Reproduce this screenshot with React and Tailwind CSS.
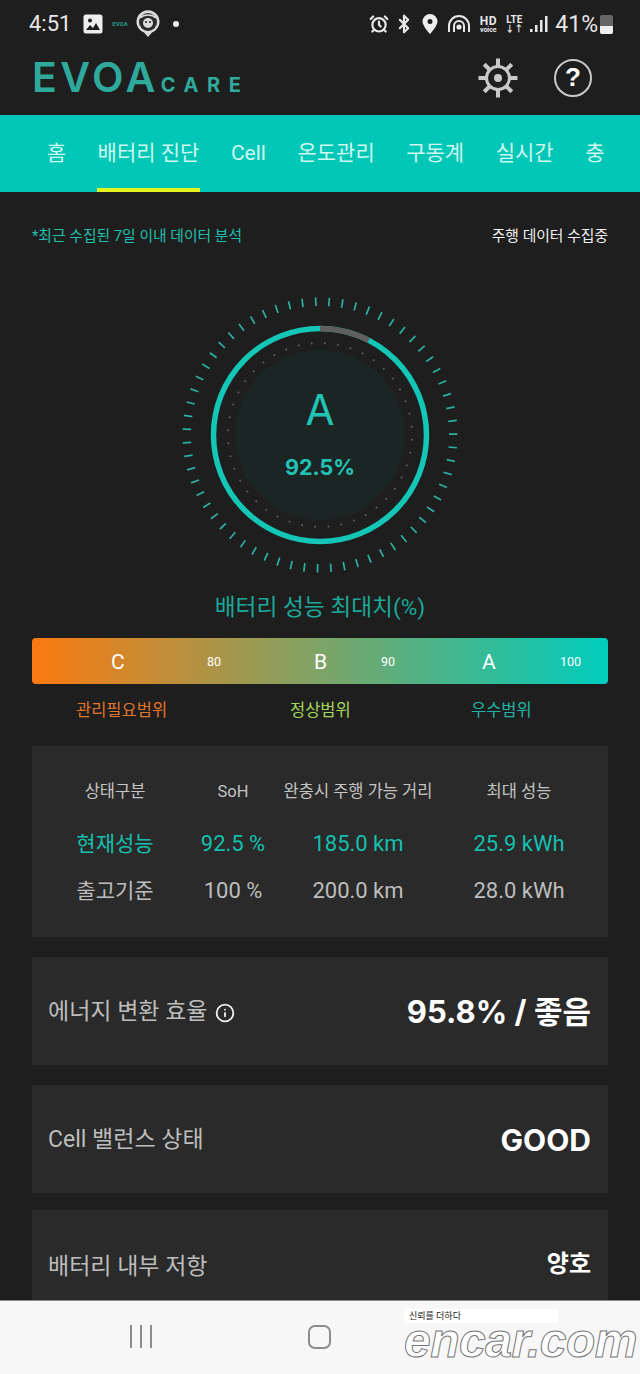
import React from "react";
import { Info, AlarmClock, Bluetooth } from "lucide-react";

const KR = "font-['Roboto','Noto_Sans_CJK_KR',sans-serif]";
const GEO = "font-['Inter','Noto_Sans_CJK_KR',sans-serif]";

function Gauge() {
  const c = 140;
  const ticks = Array.from({ length: 63 }, (_, i) => (i * 360) / 63 + 3.9);
  const dots = Array.from({ length: 44 }, (_, i) => (i * 360) / 44 + 3);
  return (
    <div className="relative w-[280px] h-[280px]">
      <svg width="280" height="280" viewBox="0 0 280 280">
        {ticks.map((a) => {
          const r = (a * Math.PI) / 180;
          return (
            <line key={a} x1={c + 129 * Math.sin(r)} y1={c - 129 * Math.cos(r)} x2={c + 137.5 * Math.sin(r)} y2={c - 137.5 * Math.cos(r)} stroke="#2cb09f" strokeWidth="1.7" />
          );
        })}
        <circle cx={c} cy={c} r="85" fill="#1b2524" />
        {dots.map((a) => {
          const r = (a * Math.PI) / 180;
          return <circle key={a} cx={c + 92 * Math.sin(r)} cy={c - 92 * Math.cos(r)} r="1" fill="#5a6664" />;
        })}
        <circle cx={c} cy={c} r="106.500" fill="none" stroke="#14c6b6" strokeWidth="5.500" />
        <path d={`M ${c} ${c - 106.5} A 106.500 106.500 0 0 1 ${c + 106.5 * Math.sin(0.475)} ${c - 106.5 * Math.cos(0.475)}`} fill="none" stroke="#5f5f5f" strokeWidth="5.700" />
      </svg>
      <div className={`absolute left-0 right-0 top-[90px] text-center text-[42px] leading-[50px] font-normal text-[#22c3b4] ${GEO}`}>A</div>
      <div className={`absolute left-0 right-0 top-[158px] text-center text-[21.500px] leading-[28px] font-bold text-[#22c3b4] ${GEO}`}>92.5%</div>
    </div>
  );
}

function Gear() {
  const teeth = Array.from({ length: 8 }, (_, i) => i * 45);
  return (
    <svg width="42" height="42" viewBox="0 0 42 42" fill="none" stroke="#c9c9c9">
      <circle cx="21" cy="21" r="11.500" strokeWidth="3" />
      <circle cx="21" cy="21" r="4" fill="#c9c9c9" stroke="none" />
      {teeth.map((a) => (
        <line key={a} x1="21" y1="9" x2="21" y2="1.500" strokeWidth="4" transform={`rotate(${a} 21 21)`} />
      ))}
    </svg>
  );
}

function StatusBar() {
  return (
    <div className={`h-12 flex items-center pl-[29px] pr-[27px] text-[#e8e8e8] ${KR}`}>
      <span className="text-[22px] leading-none w-[54px]">4:51</span>
      <svg width="20" height="20" viewBox="0 0 20 20" className="mr-[7px]">
        <rect x="0.500" y="0.500" width="19" height="19" rx="2.500" fill="#eee" />
        <path d="M3 16l4-5 3 3 3-5 4 7z" fill="#1d1d1d" />
        <circle cx="7" cy="6.500" r="2" fill="#1d1d1d" />
      </svg>
      <div className="w-[20px] mr-[6px] text-center text-[6px] leading-none font-bold text-[#2a9c8f]">EVOA</div>
      <svg width="24" height="28" viewBox="0 0 24 28" className="mr-[13px]" fill="none">
        <path d="M12 27l-4-4.500A11.500 11.500 0 1 1 16 22.500z" fill="#dcdcdc" />
        <circle cx="12" cy="12" r="9" fill="#2a2a2a" />
        <circle cx="12" cy="13" r="5" fill="#ddd" />
        <circle cx="10" cy="12" r="1" fill="#222" />
        <circle cx="14" cy="12" r="1" fill="#222" />
        <path d="M4 8c4-4 12-4 16 0" stroke="#ddd" strokeWidth="1.500" />
      </svg>
      <span className="w-[6px] h-[6px] rounded-full bg-[#eee]" />
      <div className="flex-1" />
      <AlarmClock size={20} strokeWidth={2.6} className="mr-[5px] -ml-[3px]" />
      <Bluetooth size={20} strokeWidth={2.6} className="mr-[7px]" />
      <svg width="18" height="20" viewBox="0 0 18 20" className="mr-[8px]">
        <path fillRule="evenodd" fill="#eee" d="M9 0a7.500 7.500 0 0 1 7.500 7.500C16.500 12 9 20 9 20S1.500 12 1.500 7.500A7.500 7.500 0 0 1 9 0zm0 5a2.500 2.500 0 1 0 0 5 2.500 2.500 0 0 0 0-5z" />
      </svg>
      <svg width="24" height="22" viewBox="0 0 24 22" fill="none" stroke="#e8e8e8" strokeWidth="2" className="mr-[7px]">
        <path d="M2 19v-6a10 10 0 0 1 20 0v6" />
        <path d="M7 19v-6a5 5 0 0 1 10 0v6" />
        <circle cx="12" cy="14" r="1.600" fill="#e8e8e8" />
      </svg>
      <div className="w-[20px] mr-[7px] flex flex-col items-center font-bold leading-none">
        <span className="text-[12px] tracking-[0.5px]">HD</span>
        <span className="text-[7px]">voice</span>
      </div>
      <div className="w-[18px] mr-[7px] flex flex-col items-center font-bold leading-none">
        <span className="text-[10px]">LTE</span>
        <span className="text-[9px] leading-[9px]">↓↑</span>
      </div>
      <svg width="18" height="18" viewBox="0 0 18 18" fill="#e8e8e8" className="mr-[7px]">
        <rect x="0" y="14" width="2.500" height="3" />
        <rect x="5" y="10" width="2.500" height="7" />
        <rect x="10" y="5" width="2.500" height="12" />
        <rect x="15" y="1" width="2.500" height="16" />
      </svg>
      <span className="text-[23px] leading-none mr-[2px]">41%</span>
      <div className="w-[13px] h-[19px] rounded-[2px] bg-[#666] flex flex-col justify-end overflow-hidden">
        <div className="h-[8px] bg-[#eee]" />
      </div>
    </div>
  );
}

function Header() {
  return (
    <div className="h-[67px] flex items-center pl-[32px] pr-[48px] pb-[8px]">
      <div className={`flex items-baseline text-[#2fa99c] ${GEO}`}>
        <span className="text-[41px] leading-none font-semibold tracking-[3.500px]">EVOA</span>
        <span className="text-[20px] leading-none font-bold tracking-[8.500px] ml-[2px]">CARE</span>
      </div>
      <div className="flex-1" />
      <Gear />
      <div className="w-[38px] h-[38px] ml-[35px] rounded-full border-[2.500px] border-[#c9c9c9] flex items-center justify-center text-[26px] font-bold text-white font-['Liberation_Sans',sans-serif]">?</div>
    </div>
  );
}

function Tabs() {
  const items = ["홈", "배터리 진단", "Cell", "온도관리", "구동계", "실시간", "충"];
  return (
    <div className={`h-[77px] bg-[#02c7b6] pl-[31px] flex overflow-hidden text-[21px] text-[#cdf7f1] ${KR}`}>
      {items.map((t, i) => (
        <div key={t} className="h-full flex items-center px-[15.750px] relative">
          <span className="whitespace-nowrap">{t}</span>
          {i === 1 && <span className="absolute left-[15px] right-[15px] bottom-0 h-[4px] bg-[#e4f41c]" />}
        </div>
      ))}
    </div>
  );
}

function Row({ label, value, valueClass, extra, className = "" }) {
  return (
    <div className={`h-[108px] bg-[#2a2a2a] flex items-center pl-[16px] pr-[17px] pt-[3px] ${className}`}>
      <span className={`text-[23px] text-[#bdbdbd] ${KR}`}>{label}</span>
      {extra}
      <div className="flex-1" />
      <span className={`font-bold text-white ${GEO} ${valueClass}`}>{value}</span>
    </div>
  );
}

export default function App() {
  const head = ["상태구분", "SoH", "완충시 주행 가능 거리", "최대 성능"];
  const cur = ["현재성능", "92.5 %", "185.0 km", "25.9 kWh"];
  const base = ["출고기준", "100 %", "200.0 km", "28.0 kWh"];
  const grid = "grid grid-cols-[166px_70px_180px_142px] text-center";
  const cell = (t, i) => (
    <span key={t} className={`whitespace-nowrap ${i === 0 ? "text-[21px]" : ""}`}>{t}</span>
  );
  return (
    <div className={`w-[640px] h-[1374px] bg-[#1e1e1e] flex flex-col overflow-hidden ${KR}`}>
      <StatusBar />
      <Header />
      <Tabs />
      <main className="flex-1 overflow-hidden px-[32px] min-h-0">
        <div className="flex justify-between items-center mt-[34px] h-[20px] text-[14.800px]">
          <span className="text-[#1fc0ae]">*최근 수집된 7일 이내 데이터 분석</span>
          <span className="text-[#f0f0f0]">주행 데이터 수집중</span>
        </div>
        <div className="flex justify-center mt-[49px]">
          <Gauge />
        </div>
        <div className="text-center text-[22.700px] leading-[30px] mt-[18px] text-[#1ba99a]">배터리 성능 최대치(%)</div>
        <div className="relative mt-[15px] h-[46px] rounded-[4px] bg-[linear-gradient(90deg,#fb7a10,#00cdbd)] text-white">
          <span className="absolute left-[79px] top-[12px] text-[21px] leading-[24px]">C</span>
          <span className="absolute left-[175px] top-[16px] text-[12.500px] leading-[16px]">80</span>
          <span className="absolute left-[282px] top-[12px] text-[21px] leading-[24px]">B</span>
          <span className="absolute left-[349px] top-[16px] text-[12.500px] leading-[16px]">90</span>
          <span className="absolute left-[450px] top-[12px] text-[21px] leading-[24px]">A</span>
          <span className="absolute left-[528px] top-[16px] text-[12.500px] leading-[16px]">100</span>
        </div>
        <div className="relative h-[50px] text-[16.500px] leading-[20px]">
          <span className="absolute left-[44px] top-[17px] text-[#e2752a]">관리필요범위</span>
          <span className="absolute left-[258px] top-[17px] text-[#a6d65c]">정상범위</span>
          <span className="absolute left-[439px] top-[17px] text-[#1fb5a6]">우수범위</span>
        </div>
        <div className="mt-[12px] h-[191px] bg-[#2a2a2a] pt-[35px]">
          <div className={`${grid} text-[16.500px] leading-[22px] text-[#c4c4c4]`}>
            {head.map((t) => <span key={t} className="whitespace-nowrap">{t}</span>)}
          </div>
          <div className={`${grid} mt-[26px] text-[22px] leading-[30px] text-[#14bfae]`}>
            {cur.map(cell)}
          </div>
          <div className={`${grid} mt-[17px] text-[22px] leading-[30px] text-[#bdbdbd]`}>
            {base.map(cell)}
          </div>
        </div>
        <Row className="mt-[20px]" label="에너지 변환 효율" value="95.8% / 좋음" valueClass="text-[31px]" extra={<Info size={20} strokeWidth={2.2} className="ml-[7px] text-[#eeeeee]" />} />
        <Row className="mt-[20px]" label="Cell 밸런스 상태" value="GOOD" valueClass="text-[30px]" />
        <div className="mt-[17px] h-[108px] bg-[#2a2a2a] flex items-center pl-[16px] pr-[17px]">
          <span className="mt-[6px] text-[23px] leading-[30px] text-[#bdbdbd]">배터리 내부 저항</span>
          <div className="flex-1" />
          <span className="text-[24px] leading-[36px] font-bold text-white">양호</span>
        </div>
      </main>
      <nav className="relative h-[74px] shrink-0 bg-[#f7f7f7] border-t border-[#8a8a8a] flex items-center pb-[2px]">
        <div className="ml-[130px] flex gap-[8px]">
          <span className="w-[2px] h-[23px] bg-[#8c8c8c]" />
          <span className="w-[2px] h-[23px] bg-[#8c8c8c]" />
          <span className="w-[2px] h-[23px] bg-[#8c8c8c]" />
        </div>
        <span className="ml-[156px] w-[23px] h-[24px] rounded-[7px] border-2 border-[#8c8c8c]" />
        <div className="absolute left-[404px] top-[8px] w-[154px] h-[14px] bg-white text-[9px] leading-[14px] pl-[5px] text-[#222]">신뢰를 더하다</div>
        <div className="absolute left-[404px] top-[22px] text-[48px] leading-[36px] tracking-[-0.5px] italic font-bold text-white font-['Liberation_Sans',sans-serif] [-webkit-text-stroke:1px_#777]">encar.com</div>
      </nav>
    </div>
  );
}
